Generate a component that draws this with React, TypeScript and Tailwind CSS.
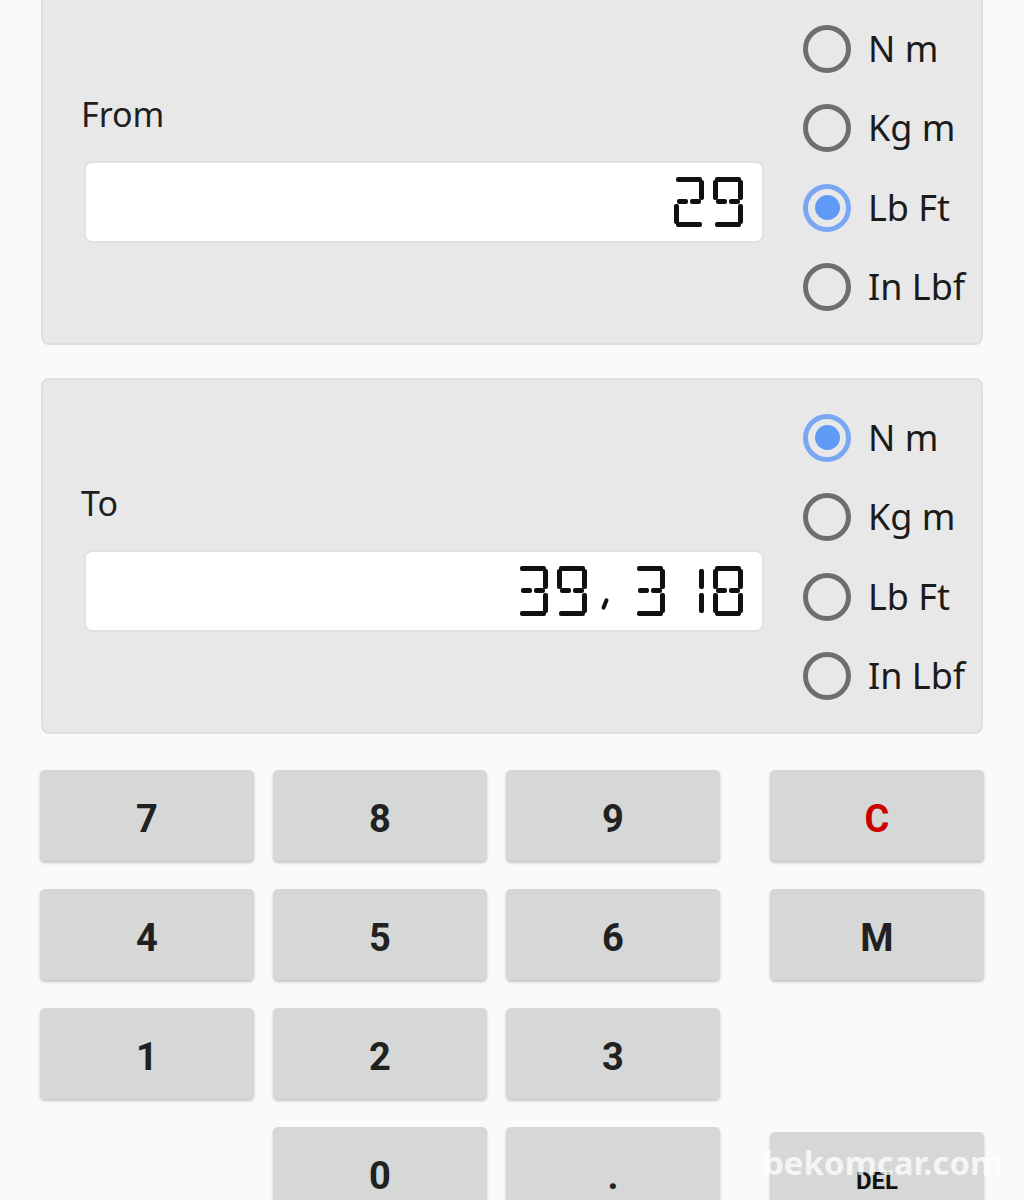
import React from "react";

const SEG: Record<string, string> = {
  a: "left-[2px] top-0 h-[5px] w-[26px]",
  b: "right-0 top-[3px] h-[20px] w-[5px]",
  c: "right-0 top-[27px] h-[20px] w-[5px]",
  d: "left-[2px] bottom-0 h-[5px] w-[26px]",
  e: "left-0 top-[27px] h-[20px] w-[5px]",
  f: "left-0 top-[3px] h-[20px] w-[5px]",
  g1: "left-[3px] top-[22px] h-[5px] w-[11px]",
  g2: "right-[3px] top-[22px] h-[5px] w-[11px]",
};

const DIGITS: Record<string, string[]> = {
  "0": ["a", "b", "c", "d", "e", "f"],
  "1": ["b", "c"],
  "2": ["a", "b", "g1", "g2", "e", "d"],
  "3": ["a", "b", "g1", "g2", "c", "d"],
  "4": ["f", "g1", "g2", "b", "c"],
  "5": ["a", "f", "g1", "g2", "c", "d"],
  "6": ["a", "f", "g1", "g2", "e", "c", "d"],
  "7": ["a", "b", "c"],
  "8": ["a", "b", "c", "d", "e", "f", "g1", "g2"],
  "9": ["a", "b", "c", "d", "f", "g1", "g2"],
};

// lcd style readout, the value itself sits on top as transparent text
function SevenSeg({ value }: { value: string }) {
  return (
    <div className="relative flex items-center gap-[9px]">
      {value.split("").map((ch, i) => (
        <div key={i} aria-hidden className="relative h-[50px] w-[30px]">
          {ch === ","
            ? <span className="absolute bottom-[6px] left-[7px] h-[12px] w-[4px] rotate-[22deg] rounded-[2px] bg-[#111]" />
            : (DIGITS[ch] || []).map((s) => (
                <span key={s} className={"absolute rounded-[2px] bg-[#111] " + SEG[s]} />
              ))}
        </div>
      ))}
      <span className="absolute inset-0 flex items-center justify-end font-['Liberation_Mono',monospace] text-[40px] leading-none text-transparent">
        {value}
      </span>
    </div>
  );
}

const UNITS = ["N m", "Kg m", "Lb Ft", "In Lbf"];

function Radio({ label, checked }: { label: string; checked: boolean }) {
  return (
    <div className="flex h-[79.5px] items-center">
      {checked ? (
        <span className="flex h-[48px] w-[48px] items-center justify-center rounded-full border-[5px] border-[#7aa7f3]">
          <span className="h-[25px] w-[25px] rounded-full bg-[#5f9af7]" />
        </span>
      ) : (
        <span className="h-[48px] w-[48px] rounded-full border-[5px] border-[#6e6e6e]" />
      )}
      <span className="ml-[17px] text-[36px] leading-none text-[#1b1b1b]">{label}</span>
    </div>
  );
}

function Panel({ label, value, selected }: { label: string; value: string; selected: number }) {
  return (
    <div className="flex h-[356px] rounded-[8px] border-2 border-[#dedede] bg-[#e8e8e8]">
      <div className="flex flex-col pl-[38px] pt-[100px]">
        <div className="text-[34px] leading-[46px] text-[#1f1f1f]">{label}</div>
        <div className="ml-[3px] mt-[24px] flex h-[82px] w-[680px] items-center justify-end rounded-[8px] border-2 border-[#e1e1e1] bg-white pr-[19px]">
          <SevenSeg value={value} />
        </div>
      </div>
      <div className="ml-[39px] flex flex-col pt-[18px]">
        {UNITS.map((u, i) => (
          <Radio key={u} label={u} checked={i === selected} />
        ))}
      </div>
    </div>
  );
}

function Key({ label, className = "" }: { label: string; className?: string }) {
  return (
    <button
      className={
        "flex h-[91px] w-[214px] items-center justify-center rounded-[5px] bg-[#d6d7d7] pt-[7px] font-['Roboto',sans-serif] font-bold text-[#212121] shadow-[0_2px_3px_rgba(0,0,0,0.22)] " +
        className
      }
    >
      {label}
    </button>
  );
}

export default function App() {
  return (
    <div className="relative h-[1200px] w-full overflow-hidden bg-[#fafafa] font-['Noto_Sans',sans-serif]">
      <div className="-mt-[11px] flex flex-col gap-[33px] px-[41px]">
        <Panel label="From" value="29" selected={2} />
        <Panel label="To" value="39,318" selected={0} />
      </div>

      <div className="mt-[36px] grid grid-cols-[214px_214px_214px_1fr] gap-x-[19px] gap-y-[28px] px-[40px]">
        <Key label="7" className="text-[38px]" />
        <Key label="8" className="text-[38px]" />
        <Key label="9" className="text-[38px]" />
        <Key label="C" className="justify-self-end text-[38px] !text-[#cc0000]" />

        <Key label="4" className="text-[38px]" />
        <Key label="5" className="text-[38px]" />
        <Key label="6" className="text-[38px]" />
        <Key label="M" className="justify-self-end text-[38px]" />

        <Key label="1" className="text-[38px]" />
        <Key label="2" className="text-[38px]" />
        <Key label="3" className="text-[38px]" />
        <div />

        <div />
        <Key label="0" className="text-[38px]" />
        <Key label="." className="text-[38px]" />
        <Key label="DEL" className="mt-[5px] justify-self-end font-['DejaVu_Sans',sans-serif] text-[24px] !text-[#111]" />
      </div>

      <div className="absolute left-[763px] top-[1146px] text-[33px] font-bold leading-none text-white/75">
        bekomcar.com
      </div>
    </div>
  );
}
